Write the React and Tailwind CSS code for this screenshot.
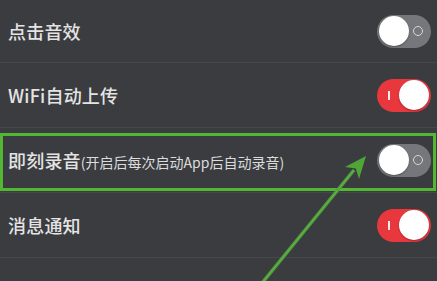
import React from 'react';

const rows = [
  { id: 'click', label: '点击音效', on: false, h: 'h-[63px]' },
  { id: 'wifi', label: 'WiFi自动上传', on: true, h: 'h-[65px]' },
  { id: 'record', label: '即刻录音', note: '(开启后每次启动App后自动录音)', on: false, h: 'h-[65px]' },
  { id: 'notify', label: '消息通知', on: true, h: 'h-[65px]' },
];

// iOS-style switch: white knob, "I" / "O" marks
const Toggle = ({ on }) => (
  <div
    className={`w-[54px] h-[33px] rounded-full flex items-center justify-between ${
      on ? 'bg-[#e8383e] pl-[11px] pr-[2px]' : 'bg-[#76777b] pl-[2px] pr-[8px]'
    }`}
  >
    {on ? (
      <>
        <span className="w-[1.5px] h-[9px] bg-white/90" />
        <span className="w-[30px] h-[30px] rounded-full bg-white shadow-[0_1px_2px_rgba(0,0,0,0.3)]" />
      </>
    ) : (
      <>
        <span className="w-[30px] h-[30px] rounded-full bg-white shadow-[0_1px_2px_rgba(0,0,0,0.3)]" />
        <span className="w-[10px] h-[10px] rounded-full border-[1.5px] border-[#d8d8d8]" />
      </>
    )}
  </div>
);

const App = () => {
  return (
    <div
      className="relative w-[437px] h-[281px] overflow-hidden bg-[#3b3c40] text-[#e4e4e4]"
      style={{ fontFamily: '"Noto Sans CJK SC", "Noto Sans", sans-serif' }}
    >
      {rows.map((row) => (
        <div
          key={row.id}
          className={`${row.h} flex items-center justify-between pl-[8px] pr-[6px] border-b border-[#46474b]`}
        >
          <div className="flex items-baseline">
            <span className="text-[18px] font-medium tracking-[0.2px]">{row.label}</span>
            {row.note && <span className="text-[14px] text-[#dcdcdc]">{row.note}</span>}
          </div>
          <Toggle on={row.on} />
        </div>
      ))}

      {/* highlight box */}
      <div className="absolute left-0 top-[133px] w-[436px] h-[58px] border-[3px] border-[#52b833]" />

      {/* arrow */}
      <svg className="absolute inset-0" width="437" height="281" viewBox="0 0 437 281">
        <line x1="258" y1="288" x2="354" y2="170" stroke="#4e9f38" strokeWidth="3.5" />
        <line x1="258" y1="288" x2="354" y2="170" stroke="#7cc266" strokeWidth="1" opacity="0.6" />
        <polygon points="366,156 345,167 355.8,168.4 359,179" fill="#4fa636" />
      </svg>
    </div>
  );
};

export default App;
